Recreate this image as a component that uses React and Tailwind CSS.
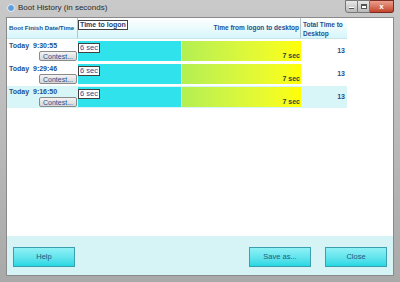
const rows = [
  { time: '9:30:55', alt: false },
  { time: '9:29:46', alt: false },
  { time: '9:16:50', alt: true },
];

function Row({ time, alt }) {
  return (
    <div className={`flex w-[340px] h-[22px] ${alt ? 'bg-[#d8f5f8]' : 'bg-white'}`}>
      <div className="w-[71px] relative">
        <div className="absolute left-[2px] top-[2px] text-[#1f4f8f] font-bold text-[7px] leading-none whitespace-nowrap">
          Today&nbsp;&nbsp;{time}
        </div>
        <button className="absolute left-[32px] top-[11px] w-[38px] h-[10px] rounded-[2px] border border-[#8a8a8a] bg-gradient-to-b from-[#f4f4f4] to-[#d6d6d6] text-[#1f4f8f] text-[7px] leading-none">
          Contest...
        </button>
      </div>
      <div className="flex w-[223px] h-[20px] mt-[1px] relative">
        <div className="w-[103px] bg-[#2fe2ec]" />
        <div className="w-px bg-[#c9f2f4]" />
        <div className="flex-1 bg-gradient-to-r from-[#b3ef52] to-[#ffff00] flex items-end justify-end pr-[1px] pb-[2px]">
          <span className="text-[#2a4a3a] font-bold text-[7px] leading-none">7 sec</span>
        </div>
        <div className="absolute left-0 top-[2px] h-[10px] px-[1px] border border-[#404040] bg-white text-[#1f4f8f] text-[7.5px] leading-[8px]">
          6 sec
        </div>
      </div>
      <div className="flex-1 flex justify-end pr-[2px] pt-[7px] text-[#1f4f8f] font-bold text-[7px] leading-none">
        13
      </div>
    </div>
  );
}

function Btn({ children, w }) {
  return (
    <button className={`${w} h-[20px] border border-[#3b9fae] bg-gradient-to-b from-[#8ef1f6] to-[#1fd8e4] text-[#1f5a80] text-[7.5px]`}>
      {children}
    </button>
  );
}

export default function App() {
  return (
    <div
      className="w-[400px] h-[282px] bg-gradient-to-b from-[#c9c9c9] to-[#a9a9a9] flex flex-col overflow-hidden"
      style={{ fontFamily: '"Liberation Sans", Arial, sans-serif' }}
    >
      <div className="h-[17px] flex items-start relative shrink-0">
        <div className="mt-[4px] ml-[7px] w-[8px] h-[8px] rounded-full bg-[#5d9fd6] border border-[#e8f2fb]" />
        <div className="mt-[4px] ml-[3px] text-[8px] leading-none text-[#2a2a2a]">Boot History (in seconds)</div>
        <div className="ml-auto mr-[6px] flex h-[13px]">
          <div className="w-[13px] border border-[#777] bg-gradient-to-b from-[#e8e8e8] to-[#b9b9b9] rounded-bl-[3px] flex items-end justify-center pb-[3px]">
            <div className="w-[5px] h-[2px] bg-white border-b border-[#555]" />
          </div>
          <div className="w-[12px] border-y border-r border-[#777] bg-gradient-to-b from-[#e8e8e8] to-[#b9b9b9] flex items-center justify-center">
            <div className="w-[6px] h-[5px] border border-t-2 border-[#555] bg-white" />
          </div>
          <div className="w-[24px] border-y border-r border-[#7a2a20] bg-gradient-to-b from-[#e9a08d] to-[#c5412b] rounded-br-[3px] flex items-center justify-center text-white font-bold text-[8px] leading-none">
            x
          </div>
        </div>
      </div>
      <div className="mx-[6px] flex-1 bg-white flex flex-col border border-[#8a8a8a] mb-[6px]">
        <div className="flex-1 flex flex-col">
          <div className="flex w-[340px] h-[21px] bg-gradient-to-b from-[#ffffff] to-[#d6f6fb] border-b border-[#c8e6ea]">
            <div className="w-[71px] border-r border-[#b0c8cc] flex items-center pl-[2px] text-[#1f4f8f] font-bold text-[6.2px] leading-none whitespace-nowrap overflow-hidden">
              Boot Finish Date/Time
            </div>
            <div className="w-[223px] border-r border-[#b0c8cc] relative">
              <div className="absolute left-0 top-[2px] px-[1px] border border-[#404040] bg-white text-[#1f3f6f] font-bold text-[7px] leading-[8px] whitespace-nowrap">
                Time to logon
              </div>
              <div className="absolute right-[1px] top-[7px] text-[#1f4f8f] font-bold text-[6.5px] leading-none whitespace-nowrap">
                Time from logon to desktop
              </div>
            </div>
            <div className="flex-1 pl-[2px] pt-[2px] text-[#1f4f8f] font-bold text-[6.5px] leading-[9px]">
              Total Time to Desktop
            </div>
          </div>
          <div className="flex flex-col gap-[1px] mt-[1px]">
            {rows.map((r) => (
              <Row key={r.time} {...r} />
            ))}
          </div>
        </div>
        <div className="h-[39px] bg-[#d6f4f6] flex items-center px-[6px] pt-[3px]">
          <Btn w="w-[62px]">Help</Btn>
          <div className="flex-1" />
          <Btn w="w-[62px]">Save as...</Btn>
          <div className="w-[14px]" />
          <Btn w="w-[62px]">Close</Btn>
        </div>
      </div>
    </div>
  );
}
